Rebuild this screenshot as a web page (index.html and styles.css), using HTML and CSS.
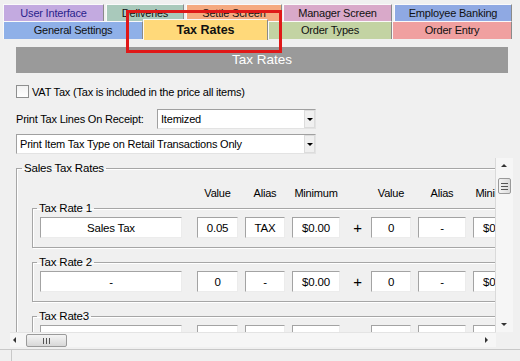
FILE: index.html
```html
<!DOCTYPE html>
<html lang="en">
<head>
    <meta charset="UTF-8">
    <title>Tax Rates</title>
    <link rel="stylesheet" href="styles.css">
</head>
<body>

<div class="window">
    <div class="tabs">
        <div class="tab-row">
            <div class="tab ui">User Interface</div>
            <div class="tab deliveries">Deliveries</div>
            <div class="tab settle">Settle Screen</div>
            <div class="tab manager">Manager Screen</div>
            <div class="tab banking">Employee Banking</div>
        </div>
        <div class="tab-row lower">
            <div class="tab general">General Settings</div>
            <div class="tab taxes selected">Tax Rates</div>
            <div class="tab types">Order Types</div>
            <div class="tab entry">Order Entry</div>
        </div>
    </div>

    <div class="mark"></div>

    <div class="title-bar">Tax Rates</div>

    <label class="vat"><span class="check"></span>VAT Tax (Tax is included in the price all items)</label>

    <div class="print-row">
        <span class="print-label">Print Tax Lines On Receipt:</span>
        <div class="combo short">Itemized<span class="drop"></span></div>
    </div>
    <div class="combo wide">Print Item Tax Type on Retail Transactions Only<span class="drop"></span></div>

    <div class="scroller">
        <div class="view">
            <fieldset class="group">
                <legend>Sales Tax Rates</legend>
                <div class="rate-row heads">
                    <span class="c-name"></span>
                    <span class="c-val">Value</span>
                    <span class="c-alias">Alias</span>
                    <span class="c-min">Minimum</span>
                    <span class="c-plus"></span>
                    <span class="c-val2">Value</span>
                    <span class="c-alias2">Alias</span>
                    <span class="c-min2">Minimum</span>
                </div>

                <fieldset class="rate">
                    <legend>Tax Rate 1</legend>
                    <div class="rate-row">
                        <input class="c-name" value="Sales Tax" readonly>
                        <input class="c-val" value="0.05" readonly>
                        <input class="c-alias" value="TAX" readonly>
                        <input class="c-min" value="$0.00" readonly>
                        <span class="c-plus">+</span>
                        <input class="c-val2" value="0" readonly>
                        <input class="c-alias2" value="-" readonly>
                        <input class="c-min2" value="$0.00" readonly>
                    </div>
                </fieldset>

                <fieldset class="rate">
                    <legend>Tax Rate 2</legend>
                    <div class="rate-row">
                        <input class="c-name" value="-" readonly>
                        <input class="c-val" value="0" readonly>
                        <input class="c-alias" value="-" readonly>
                        <input class="c-min" value="$0.00" readonly>
                        <span class="c-plus">+</span>
                        <input class="c-val2" value="0" readonly>
                        <input class="c-alias2" value="-" readonly>
                        <input class="c-min2" value="$0.00" readonly>
                    </div>
                </fieldset>

                <fieldset class="rate">
                    <legend>Tax Rate3</legend>
                    <div class="rate-row">
                        <input class="c-name" value="" readonly>
                        <input class="c-val" value="" readonly>
                        <input class="c-alias" value="" readonly>
                        <input class="c-min" value="" readonly>
                        <span class="c-plus"></span>
                        <input class="c-val2" value="" readonly>
                        <input class="c-alias2" value="" readonly>
                        <input class="c-min2" value="" readonly>
                    </div>
                </fieldset>
            </fieldset>
        </div>

        <div class="vbar">
            <span class="arrow up"></span>
            <span class="vthumb"><i></i><i></i><i></i></span>
            <span class="arrow down"></span>
        </div>
        <div class="hbar">
            <span class="arrow left"></span>
            <span class="hthumb"><i></i><i></i><i></i></span>
            <span class="arrow right"></span>
        </div>
        <div class="corner"></div>
    </div>

    <div class="status"><div class="status-cell"></div></div>
</div>

</body>
</html>
```

FILE: styles.css
```css
body {
    margin: 0;
    background: #f0f0f0;
    font-family: "Liberation Sans", Arial, sans-serif;
    font-size: 11px;
    letter-spacing: -0.2px;
    color: #000;
}
.window {
    position: relative;
    width: 520px;
    height: 361px;
    overflow: hidden;
}

/* tabs */
.tabs {
    padding: 4px 0 0 3px;
}
.tab-row {
    display: flex;
    height: 17px;
}
.tab-row.lower {
    height: 18px;
    align-items: flex-start;
}
.tab {
    box-sizing: border-box;
    height: 100%;
    text-align: center;
    line-height: 16px;
    white-space: nowrap;
    color: #111;
    border-top: 1px solid #fafafa;
    border-left: 1px solid #fafafa;
    border-right: 1px solid #8a8a8a;
}
.tab.ui { width: 101px; background: #c3aae0; color: #2a1f8c; }
.tab.deliveries { width: 78px; margin-left: 2px; background: #a9c9bb; }
.tab.settle { width: 96px; margin-left: 2px; background: #f5aa80; }
.tab.manager { width: 109px; margin-left: 1px; background: #d9a9c9; }
.tab.banking { width: 118px; margin-left: 2px; background: #8fa9e3; }
.tab.general { width: 140px; background: #8fb0e8; }
.tab.taxes { width: 125px; background: #ffd97a; }
.tab.types { width: 124px; background: #c3d3a3; }
.tab.entry { width: 120px; background: #f0a0a0; }
.tab.selected {
    height: 21px;
    margin-top: -2px;
    line-height: 20px;
    font-weight: bold;
    font-size: 12.5px;
    letter-spacing: 0;
}

.mark {
    position: absolute;
    left: 126px;
    top: 10px;
    width: 156px;
    height: 43px;
    box-sizing: border-box;
    border: 3px solid #e01818;
}

.title-bar {
    margin: 8px 12px 0 16px;
    height: 26px;
    line-height: 26px;
    background: #9a9a9a;
    color: #fff;
    font-size: 13.5px;
    letter-spacing: 0;
    text-align: center;
}

.vat {
    display: flex;
    align-items: center;
    margin: 12px 0 0 16px;
    height: 13px;
    white-space: nowrap;
}
.check {
    width: 13px;
    height: 13px;
    box-sizing: border-box;
    border: 1px solid #8e8f8f;
    background: linear-gradient(#f2f2f2, #fff);
    margin-right: 3px;
}

.print-row {
    display: flex;
    align-items: center;
    margin: 11px 0 0 16px;
    white-space: nowrap;
}
.print-label {
    width: 141px;
}
.combo {
    position: relative;
    box-sizing: border-box;
    height: 20px;
    line-height: 18px;
    padding-left: 3px;
    white-space: nowrap;
    background: #fff;
    border: 1px solid;
    border-color: #a0a0a0 #e3e3e3 #e3e3e3 #a0a0a0;
}
.combo.short { width: 159px; }
.combo.wide { width: 300px; margin: 5px 0 0 16px; }
.drop {
    position: absolute;
    right: 0;
    top: 0;
    width: 11px;
    height: 18px;
    box-sizing: border-box;
    background: #f0f0f0;
    border: 1px solid #dcdcdc;
}
.drop::after {
    content: "";
    position: absolute;
    left: 2px;
    top: 7px;
    border: 3px solid transparent;
    border-top: 3px solid #000;
}

/* scroll pane */
.scroller {
    display: grid;
    grid-template-columns: 486px 17px;
    grid-template-rows: 174px 15px;
    margin: 4px 0 0 10px;
}
.view {
    overflow: hidden;
    border-right: 1px solid #dadada;
}
fieldset {
    margin: 0;
    padding: 0;
    border: 1px solid #a6a6a6;
    box-shadow: inset 1px 1px 0 #fff, 1px 1px 0 #fff;
}
legend {
    padding: 0 2px;
    line-height: 14px;
    font-size: 11.5px;
}
.group {
    width: 620px;
    margin: 3px 0 0 6px;
    padding: 0 0 10px 15px;
}
.group > legend {
    margin-left: -10px;
}
.rate {
    width: 600px;
    margin-bottom: 7px;
    padding: 2px 0 9px 7px;
}
.rate > legend {
    margin-left: -3px;
}
.rate-row {
    display: flex;
    align-items: center;
    height: 21px;
}
.rate-row.heads {
    height: 16px;
    margin-top: 10px;
    padding-left: 8px;
}
.rate-row > * {
    box-sizing: border-box;
    flex: none;
    text-align: center;
    white-space: nowrap;
}
.rate-row input {
    height: 21px;
    padding: 0;
    font: inherit;
    font-size: 11.5px;
    letter-spacing: -0.2px;
    background: #fff;
    border: 1px solid;
    border-color: #a3a3a3 #ececec #ececec #a3a3a3;
    outline: none;
}
.c-name { width: 142px; }
.c-val { width: 41px; margin-left: 15px; }
.c-alias { width: 40px; margin-left: 7px; }
.c-min { width: 48px; margin-left: 7px; }
.c-plus { width: 31px; font-size: 15px; padding-left: 4px; }
.c-val2 { width: 40px; }
.c-alias2 { width: 48px; margin-left: 7px; }
.c-min2 { width: 48px; margin-left: 7px; }

.vbar {
    position: relative;
    background: #f6f6f6;
}
.hbar {
    position: relative;
    background: #f6f6f6;
    border-top: 1px solid #e4e4e4;
}
.corner {
    background: #f0f0f0;
}
.arrow {
    position: absolute;
    width: 0;
    height: 0;
    border: 3px solid transparent;
}
.arrow.up { left: 5px; top: 6px; border-bottom: 3px solid #333; border-top-width: 0; }
.arrow.down { left: 5px; bottom: 6px; border-top: 3px solid #333; border-bottom-width: 0; }
.arrow.left { left: 3px; top: 4px; border-right: 3px solid #333; border-left-width: 0; }
.arrow.right { right: 8px; top: 4px; border-left: 3px solid #333; border-right-width: 0; }
.vthumb, .hthumb {
    position: absolute;
    box-sizing: border-box;
    display: flex;
    justify-content: center;
    align-items: center;
    gap: 2px;
    background: linear-gradient(90deg, #f4f4f4, #dcdcdc);
    border: 1px solid #9a9a9a;
    border-radius: 2px;
}
.vthumb {
    left: 2px;
    top: 20px;
    width: 13px;
    height: 16px;
    flex-direction: column;
}
.vthumb i {
    width: 7px;
    height: 1px;
    background: #555;
}
.hthumb {
    left: 16px;
    top: 1px;
    width: 41px;
    height: 13px;
    background: linear-gradient(#f4f4f4, #d8d8d8);
}
.hthumb i {
    width: 1px;
    height: 6px;
    background: #555;
}

.status {
    margin-top: 2px;
    height: 20px;
    border-top: 1px solid #c8c8c8;
}
.status-cell {
    height: 100%;
    margin-left: 11px;
    border-left: 1px solid #c8c8c8;
}
```
